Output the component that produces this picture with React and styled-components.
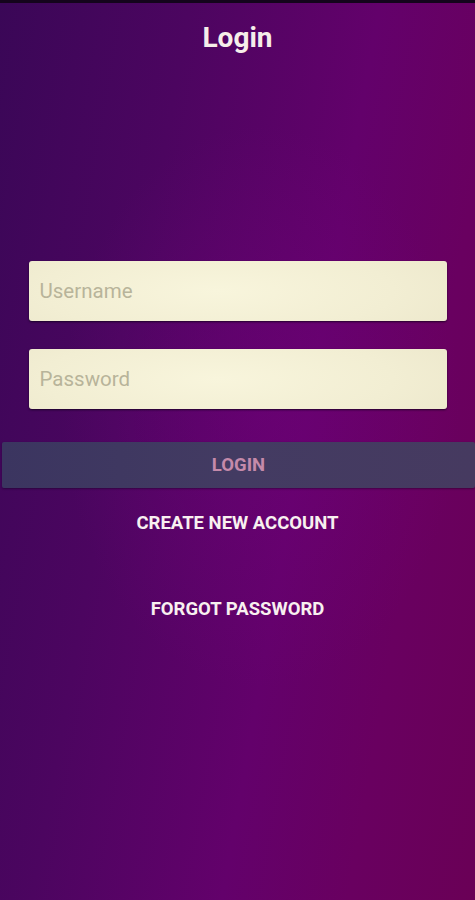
import React from "react";
import styled, { createGlobalStyle } from "styled-components";

const GlobalStyle = createGlobalStyle`
  html, body {
    margin: 0;
    padding: 0;
    background: #3c0656;
  }
  * {
    box-sizing: border-box;
  }
`;

const Screen = styled.div`
  width: 475px;
  height: 900px;
  display: flex;
  flex-direction: column;
  align-items: center;
  font-family: Roboto, "Noto Sans", sans-serif;
  border-top: 3px solid #14041c;
  background:
    radial-gradient(ellipse 60% 45% at 55% 45%, rgba(120, 0, 130, 0.35), rgba(120, 0, 130, 0) 70%),
    linear-gradient(100deg, #3a0757 0%, #4c0560 30%, #63016b 60%, #690060 80%, #6a0056 100%);
`;

const Title = styled.h1`
  margin: 18px 0 0 0;
  font-size: 28px;
  font-weight: 700;
  color: #f6eeea;
  line-height: 34px;
`;

const Form = styled.div`
  width: 100%;
  margin-top: 206px;
  display: flex;
  flex-direction: column;
  align-items: center;
`;

const Field = styled.input`
  width: 418px;
  height: 60px;
  margin-bottom: ${({ gap }) => gap}px;
  border: none;
  border-radius: 3px;
  padding: 0 11px;
  font-family: Roboto, "Noto Sans", sans-serif;
  font-size: 20.5px;
  color: #4a4636;
  background: radial-gradient(ellipse 70% 120% at 45% 50%, #f8f5dc 0%, #f2eed3 60%, #ece7cb 100%);
  box-shadow: 0 1px 2px rgba(10, 0, 20, 0.7);
  outline: none;

  &::placeholder {
    color: #b8b49a;
  }
`;

const LoginButton = styled.button`
  width: 473px;
  margin-left: 2px;
  height: 46px;
  border: none;
  border-radius: 2px;
  background: linear-gradient(90deg, #3b3560 0%, #433b62 50%, #463a60 100%);
  color: #c58aaa;
  font-family: Roboto, "Noto Sans", sans-serif;
  font-size: 18.5px;
  font-weight: 700;
  box-shadow: 0 1px 2px rgba(10, 0, 20, 0.4);
`;

const LinkButton = styled.button`
  margin-top: ${({ top }) => top}px;
  border: none;
  background: none;
  color: #f8f0f0;
  font-family: Roboto, "Noto Sans", sans-serif;
  font-size: 18.5px;
  font-weight: 700;
  line-height: 22px;
  padding: 0;
`;

export default function App() {
  return (
    <>
      <GlobalStyle />
      <Screen>
        <Title>Login</Title>
        <Form>
          <Field type="text" placeholder="Username" gap={28} />
          <Field type="password" placeholder="Password" gap={33} />
          <LoginButton>LOGIN</LoginButton>
          <LinkButton top={24}>CREATE NEW ACCOUNT</LinkButton>
          <LinkButton top={64}>FORGOT PASSWORD</LinkButton>
        </Form>
      </Screen>
    </>
  );
}
